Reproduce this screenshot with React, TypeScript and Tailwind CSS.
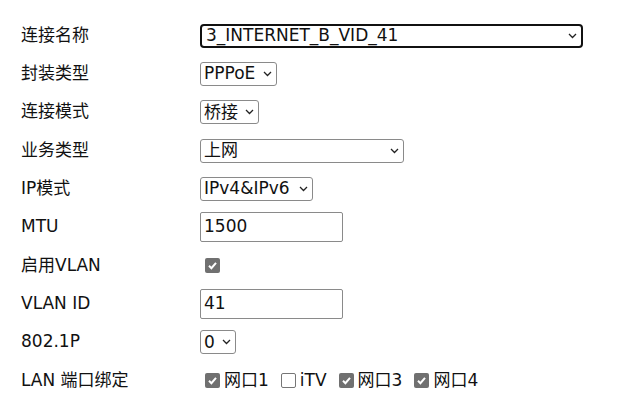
import React from 'react';

const font = { fontFamily: '"DejaVu Sans", "Noto Sans CJK SC", sans-serif' };

function Chevron() {
  return (
    <svg width="9" height="6" viewBox="0 0 9 6" className="shrink-0">
      <path d="M1 1 L4.5 4.5 L8 1" fill="none" stroke="#222" strokeWidth="1.3" />
    </svg>
  );
}

function Select({ value, w, focused = false }: { value: string; w: string; focused?: boolean }) {
  return (
    <div
      className={`flex h-[24px] items-center justify-between bg-white pr-[4px] text-[17px] leading-none text-[#111] ${w} ${
        focused ? 'rounded-[4px] border-2 border-[#111] pl-[4px]' : 'rounded-[3px] border border-[#8a8a8a] pl-[3px]'
      }`}
    >
      <span>{value}</span>
      <Chevron />
    </div>
  );
}

function TextBox({ value }: { value: string }) {
  return (
    <div className="flex h-[30px] w-[143px] items-center rounded-[2px] border border-[#8a8a8a] bg-white pl-[3px] text-[17px] text-[#111]">
      {value}
    </div>
  );
}

function Check({ on }: { on: boolean }) {
  return on ? (
    <span className="flex h-[15px] w-[15px] shrink-0 items-center justify-center rounded-[2px] bg-[#707070]">
      <svg width="11" height="11" viewBox="0 0 11 11">
        <path d="M2 5.8 L4.4 8.2 L9 2.8" fill="none" stroke="#fff" strokeWidth="2" />
      </svg>
    </span>
  ) : (
    <span className="h-[15px] w-[15px] shrink-0 rounded-[2px] border border-[#767676] bg-white" />
  );
}

const ports = [
  { name: '网口1', on: true },
  { name: 'iTV', on: false },
  { name: '网口3', on: true },
  { name: '网口4', on: true },
];

export default function App() {
  const rows: { label: string; control: React.ReactNode }[] = [
    { label: '连接名称', control: <Select value="3_INTERNET_B_VID_41" w="w-[383px]" focused /> },
    { label: '封装类型', control: <Select value="PPPoE" w="w-[77px]" /> },
    { label: '连接模式', control: <Select value="桥接" w="w-[59px]" /> },
    { label: '业务类型', control: <Select value="上网" w="w-[204px]" /> },
    { label: 'IP模式', control: <Select value="IPv4&IPv6" w="w-[113px]" /> },
    { label: 'MTU', control: <TextBox value="1500" /> },
    {
      label: '启用VLAN',
      control: (
        <div className="pl-[5px]">
          <Check on />
        </div>
      ),
    },
    { label: 'VLAN ID', control: <TextBox value="41" /> },
    { label: '802.1P', control: <Select value="0" w="w-[36px]" /> },
    {
      label: 'LAN 端口绑定',
      control: (
        <div className="flex items-center pl-[5px] text-[17px] text-[#111]">
          {ports.map((p) => (
            <div key={p.name} className="mr-[12px] flex items-center gap-[4px]">
              <Check on={p.on} />
              <span>{p.name}</span>
            </div>
          ))}
        </div>
      ),
    },
  ];

  return (
    <div className="h-[400px] w-[643px] overflow-hidden bg-white pl-[21px] pt-[16.5px]" style={font}>
      {rows.map((r) => (
        <div key={r.label} className="flex h-[38.3px] items-center">
          <div className="w-[179px] shrink-0 text-[17px] text-[#111]">{r.label}</div>
          {r.control}
        </div>
      ))}
    </div>
  );
}
